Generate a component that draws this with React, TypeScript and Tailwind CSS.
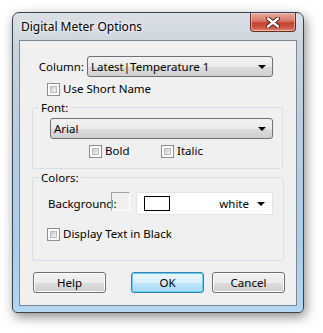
const font = { fontFamily: '"Noto Sans", "Open Sans", sans-serif' };

function Arrow() {
  return (
    <svg width="8" height="4" viewBox="0 0 8 4" className="shrink-0">
      <path d="M0 0h8L4 4z" fill="#000" />
    </svg>
  );
}

function Combo({ text, className }: { text: string; className: string }) {
  return (
    <div
      className={`flex h-[21px] items-center justify-between rounded-[3px] border border-[#707070] bg-[linear-gradient(#f2f2f2_0%,#ebebeb_50%,#dddddd_51%,#cfcfcf_100%)] pl-[3px] pr-[6px] text-[11.5px] text-black ${className}`}
    >
      <span>{text}</span>
      <Arrow />
    </div>
  );
}

function Check({ label, className }: { label: string; className?: string }) {
  return (
    <div className={`flex items-center gap-[3px] text-[11.5px] text-black ${className ?? ""}`}>
      <div className="h-[13px] w-[13px] border border-[#8e8f8f] bg-white p-[2px]">
        <div className="h-full w-full border border-[#bcbcbc] bg-[linear-gradient(135deg,#cbcbcb,#f4f4f4)]" />
      </div>
      <span className="leading-[14px]">{label}</span>
    </div>
  );
}

function Button({ text, primary }: { text: string; primary?: boolean }) {
  return (
    <div
      className={`flex h-[21px] w-[73px] items-center justify-center rounded-[3px] border text-[11.5px] text-black ${
        primary
          ? "border-[#3c7fb1] bg-[linear-gradient(#eaf6fd_0%,#d9f0fc_50%,#bee6fd_51%,#a7d9f5_100%)] shadow-[inset_0_0_0_1px_#5fd2fa]"
          : "border-[#707070] bg-[linear-gradient(#f2f2f2_0%,#ebebeb_50%,#dddddd_51%,#cfcfcf_100%)] shadow-[inset_0_0_0_1px_#fcfcfc]"
      }`}
    >
      {text}
    </div>
  );
}

export default function App() {
  return (
    <div className="relative h-[333px] w-[323px] overflow-hidden bg-white" style={font}>
      {/* window */}
      <div className="absolute left-[12px] top-[12px] flex h-[301px] w-[292px] flex-col rounded-b-[5px] rounded-t-[7px] border border-[#39434d] bg-[linear-gradient(#dbe0e5_0%,#c9d3dc_12%,#b8cde2_40%,#a9cdec_80%,#b4d8f2_100%)] px-[6px] pb-[6px] shadow-[2px_4px_12px_rgba(0,0,0,0.45)]">
        {/* title bar */}
        <div className="relative flex h-[27px] shrink-0 items-center">
          <span className="ml-[2px] mt-[1px] text-[12px] text-black [text-shadow:0_0_6px_#fff,0_0_3px_#fff]">
            Digital Meter Options
          </span>
          <div className="absolute right-[1px] top-0 flex h-[19px] w-[46px] items-center justify-center rounded-b-[4px] border border-t-0 border-[#6b2a22] bg-[linear-gradient(#e9a99e_0%,#d77767_45%,#c2422f_55%,#cf5d4a_85%,#e3957f_100%)] shadow-[inset_0_0_0_1px_rgba(255,220,210,0.5)]">
            <svg width="14" height="11" viewBox="0 0 14 11">
              <path
                d="M2 1.5L12 9.5M12 1.5L2 9.5"
                stroke="#4a1a14"
                strokeWidth="4.2"
                strokeLinecap="round"
              />
              <path
                d="M2 1.5L12 9.5M12 1.5L2 9.5"
                stroke="#fff"
                strokeWidth="2.4"
                strokeLinecap="round"
              />
            </svg>
          </div>
        </div>

        {/* client area */}
        <div className="flex flex-1 flex-col border border-[#7a8896] bg-[#f0f0f0] pt-[15px]">
          <div className="flex items-center">
            <span className="w-[64px] text-right text-[11.5px] text-black">Column:</span>
            <Combo text="Latest|Temperature 1" className="ml-[3px] w-[186px]" />
          </div>
          <Check label="Use Short Name" className="ml-[27px] mt-[5px]" />

          <fieldset className="ml-[12px] mt-[3px] h-[70px] w-[251px] rounded-[3px] border border-[#d5dfe5] px-0">
            <legend className="ml-[6px] px-[2px] text-[11.5px] text-black">Font:</legend>
            <Combo text="Arial" className="ml-[17px] mt-[2px] w-[223px]" />
            <div className="mt-[5px] flex">
              <div className="ml-[56px] w-[72px]">
                <Check label="Bold" />
              </div>
              <Check label="Italic" />
            </div>
          </fieldset>

          <fieldset className="ml-[12px] mt-0 h-[92px] w-[252px] rounded-[3px] border border-[#d5dfe5] px-0">
            <legend className="ml-[6px] px-[2px] text-[11.5px] text-black">Colors:</legend>
            <div className="mt-[6px] flex items-start">
              <span className="ml-[15px] mt-[3px] w-[62px] text-[11.5px] text-black">Background:</span>
              <div className="ml-[1px] h-[19px] w-[19px] border border-b-[#ffffff] border-l-[#a0a0a0] border-r-[#ffffff] border-t-[#a0a0a0]" />
              <div className="ml-[6px] flex h-[23px] w-[137px] items-center rounded-[2px] border border-[#e3e3e3] bg-white pl-[7px] pr-[7px] text-[11.5px] text-black">
                <div className="h-[15px] w-[26px] border border-black bg-white" />
                <span className="ml-auto mr-[8px]">white</span>
                <Arrow />
              </div>
            </div>
            <Check label="Display Text in Black" className="ml-[14px] mt-[12px]" />
          </fieldset>

          <div className="mt-[11px] flex">
            <div className="ml-[13px]">
              <Button text="Help" />
            </div>
            <div className="ml-[25px]">
              <Button text="OK" primary />
            </div>
            <div className="ml-[8px]">
              <Button text="Cancel" />
            </div>
          </div>
        </div>
      </div>
    </div>
  );
}
